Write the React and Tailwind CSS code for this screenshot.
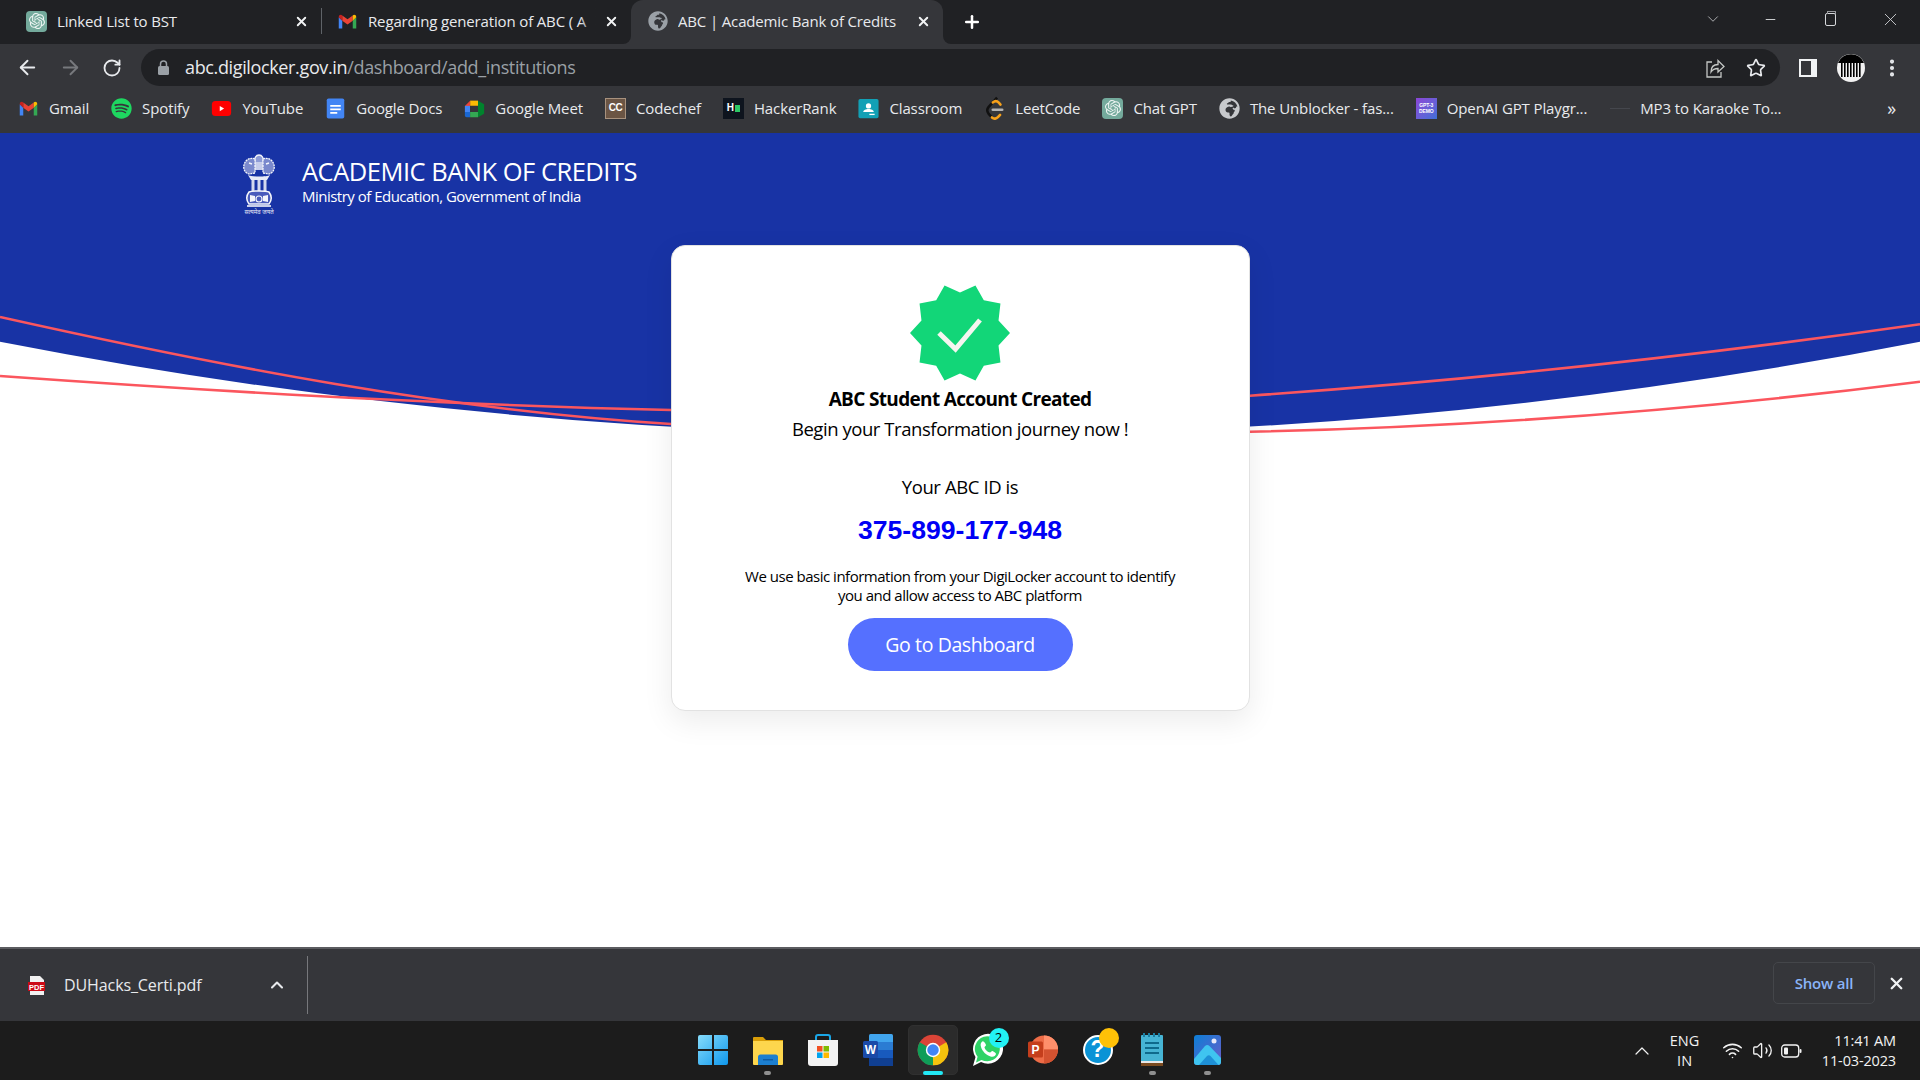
import React from 'react';
import { ArrowLeft, ArrowRight, RotateCw, Star, X, Plus, ChevronDown, ChevronUp, Minus, EllipsisVertical, Wifi, Volume2 } from 'lucide-react';
import { FaSpotify, FaGlobeAfrica } from 'react-icons/fa';
import { SiOpenai } from 'react-icons/si';

const segoe = { fontFamily: '"Open Sans", "Noto Sans", sans-serif' };

function GmailIcon({ size = 21 }) {
    return (
        <svg width={size} height={size} viewBox="0 0 24 24">
            <path d="M2 7v13h4v-9z" fill="#4285F4" />
            <path d="M18 11v9h4V7z" fill="#34A853" />
            <path d="M6 11l6 4.5 6-4.5V5l-6 4.5L6 5z" fill="#EA4335" />
            <path d="M2 7c0-2.5 2.4-3.4 4-2v6L2 7z" fill="#C5221F" />
            <path d="M22 7c0-2.500-2.400-3.400-4-2v6l4-4z" fill="#FBBC04" />
        </svg>
    );
}

function ChatGptIcon({ size = 21 }) {
    return (
        <div className="flex items-center justify-center rounded-[4px] bg-[#74aa9c]" style={{ width: size, height: size }}>
            <SiOpenai size={size - 5} color="#eef5f3" />
        </div>
    );
}

function YoutubeIcon() {
    return (
        <svg width="21" height="21" viewBox="0 0 24 24">
            <rect x="1" y="3.500" width="22" height="17" rx="4" fill="#f00" />
            <path d="M10 9l5 3-5 3z" fill="#fff" />
        </svg>
    );
}

function DocsIcon() {
    return (
        <svg width="21" height="21" viewBox="0 0 24 24">
            <rect x="2" y="0.500" width="20" height="23" rx="2" fill="#4285f4" />
            <path d="M6 8h12v2H6zM6 12h12v2H6zM6 16h8v2H6z" fill="#fff" />
        </svg>
    );
}

function MeetIcon() {
    return (
        <svg width="21" height="21" viewBox="0 0 24 24">
            <path d="M7 3h9v6H7z" fill="#fbbc04" />
            <path d="M1 9l6-6v6z" fill="#ea4335" />
            <path d="M1 9h6v7H1z" fill="#4285f4" />
            <path d="M1 16h6v6H3a2 2 0 0 1-2-2z" fill="#1967d2" />
            <path d="M7 16h9v6H7z" fill="#34a853" />
            <path d="M16 3v19l7-4V7z" fill="#00832d" />
            <rect x="7" y="9" width="9" height="7" fill="#35363a" />
        </svg>
    );
}

function CodechefIcon() {
    return (
        <div className="flex h-[21px] w-[21px] items-center justify-center border border-[#a8927e] bg-[#6b5544] text-[10px] font-bold leading-none tracking-[-0.5px] text-white" style={{ fontFamily: '"Liberation Sans", sans-serif' }}>
            CC
        </div>
    );
}

function HackerRankIcon() {
    return (
        <div className="flex h-[21px] w-[21px] items-center justify-center gap-[1px] bg-[#0e141e]">
            <span className="text-[10px] font-bold leading-none text-white" style={{ fontFamily: '"Liberation Sans", sans-serif' }}>H</span>
            <span className="h-[7px] w-[5px] bg-[#2ec866]" />
        </div>
    );
}

function ClassroomIcon() {
    return (
        <svg width="21" height="21" viewBox="0 0 24 24">
            <rect x="0.500" y="1" width="23" height="22" rx="2" fill="#12a0b5" />
            <circle cx="12" cy="9" r="3" fill="#fff" />
            <path d="M6 16c0-2.500 3-3.500 6-3.500s6 1 6 3.500z" fill="#fff" />
            <rect x="13" y="18" width="6" height="1.500" fill="#fff" />
        </svg>
    );
}

function LeetCodeIcon() {
    return (
        <svg width="21" height="24" viewBox="0 0 24 28">
            <path d="M15 2L5 13c-2 2.500-2 5 0 7.500l4 4.500" fill="none" stroke="#111" strokeWidth="3" />
            <path d="M9 25c2.500 2 5 1.800 7-.300l2.500-2.700" fill="none" stroke="#f7a11a" strokeWidth="3" strokeLinecap="round" />
            <path d="M10 7.500c2.500-2 5-1.800 7 .300l2 2.200" fill="none" stroke="#f7a11a" strokeWidth="3" strokeLinecap="round" />
            <path d="M10 16h11" stroke="#b3b3b3" strokeWidth="3" strokeLinecap="round" />
        </svg>
    );
}

function Gpt3Icon() {
    return (
        <div className="flex h-[21px] w-[21px] flex-col items-center justify-center bg-gradient-to-br from-[#8a45d6] to-[#3b6fd8] text-[5px] font-bold leading-[6px] text-white" style={{ fontFamily: '"Liberation Sans", sans-serif' }}>
            <span>GPT-3</span>
            <span>DEMO</span>
        </div>
    );
}

const bookmarks = [
    { label: 'Gmail', icon: <GmailIcon /> },
    { label: 'Spotify', icon: <FaSpotify size={21} color="#1ed760" /> },
    { label: 'YouTube', icon: <YoutubeIcon /> },
    { label: 'Google Docs', icon: <DocsIcon /> },
    { label: 'Google Meet', icon: <MeetIcon /> },
    { label: 'Codechef', icon: <CodechefIcon /> },
    { label: 'HackerRank', icon: <HackerRankIcon /> },
    { label: 'Classroom', icon: <ClassroomIcon /> },
    { label: 'LeetCode', icon: <LeetCodeIcon /> },
    { label: 'Chat GPT', icon: <ChatGptIcon /> },
    { label: 'The Unblocker - fas...', icon: <FaGlobeAfrica size={21} color="#c7c9cc" /> },
    { label: 'OpenAI GPT Playgr...', icon: <Gpt3Icon /> },
    { label: 'MP3 to Karaoke To...', icon: <span className="block h-[1px] w-[20px] bg-[#45474d]" /> },
];

function Tab({ icon, title, active, fade, className }) {
    return (
        <div className={`relative flex h-[44px] w-[312px] items-center pb-[2px] pr-[12px] ${active ? 'rounded-t-[12px] bg-[#35363a]' : ''} ${className}`}>
            <div className="flex w-[21px] shrink-0 items-center justify-center">{icon}</div>
            <div className="ml-[10px] flex-1 overflow-hidden whitespace-nowrap text-[15px] tracking-[-0.15px] text-[#e8eaed]">
                {title}
            </div>
            {fade && <div className="absolute bottom-0 right-[33px] top-0 w-[18px] bg-gradient-to-r from-transparent to-[#202124]" />}
            <X size={15} strokeWidth={3} className="ml-[6px] shrink-0 text-[#f1f3f4]" />
            {active && (
                <>
                    <div className="absolute bottom-0 left-[-8px] h-[8px] w-[8px] bg-[#35363a]">
                        <div className="h-full w-full rounded-br-[8px] bg-[#202124]" />
                    </div>
                    <div className="absolute bottom-0 right-[-8px] h-[8px] w-[8px] bg-[#35363a]">
                        <div className="h-full w-full rounded-bl-[8px] bg-[#202124]" />
                    </div>
                </>
            )}
        </div>
    );
}

function TabStrip() {
    return (
        <div className="flex h-[44px] items-center bg-[#202124] pl-[9px]">
            <Tab icon={<ChatGptIcon />} title="Linked List to BST" className="pl-[17px]" />
            <div className="relative z-10 mb-[2px] h-[26px] w-[1px] bg-[#5f6368]" />
            <Tab icon={<GmailIcon />} title="Regarding generation of ABC ( A" fade className="ml-[-3px] pl-[18px]" />
            <Tab icon={<FaGlobeAfrica size={20} color="#9aa0a6" />} title="ABC | Academic Bank of Credits" active className="pl-[16px]" />
            <Plus size={20} strokeWidth={3} className="ml-[19px] text-white" />
            <div className="mb-[6px] ml-auto flex items-center text-[#d5d7da]">
                <ChevronDown size={18} strokeWidth={1} className="mr-[41.500px]" />
                <Minus size={15} strokeWidth={1.5} className="mr-[47px]" />
                <div className="relative mr-[44px] h-[13px] w-[11px] rounded-[2px] border border-[#d5d7da]">
                    <div className="absolute left-[1px] top-[-3px] h-[3px] w-[9px] border-x border-t border-[#9a9ca0]" />
                </div>
                <X size={21} strokeWidth={1} className="mr-[19px]" />
            </div>
        </div>
    );
}

function Toolbar() {
    return (
        <div className="flex h-[43px] items-center bg-[#35363a] pl-[16px] pt-[4px]">
            <ArrowLeft size={23} strokeWidth={2} className="text-[#e8eaed]" />
            <ArrowRight size={23} strokeWidth={2} className="ml-[20px] text-[#77797d]" />
            <RotateCw size={20} strokeWidth={2.2} className="ml-[20px] text-[#e8eaed]" />
            <div className="ml-[19px] flex h-[37px] w-[1639px] items-center rounded-full bg-[#202124] pl-[17px]">
                <svg width="11" height="15" viewBox="0 0 11 15">
                    <path d="M2.500 6V4a3 3 0 0 1 6 0v2" fill="none" stroke="#9aa0a6" strokeWidth="1.500" />
                    <rect y="6" width="11" height="9" rx="1.500" fill="#9aa0a6" />
                </svg>
                <span className="ml-[16px] text-[18px] tracking-[-0.36px] text-[#e8eaed]">
                    abc.digilocker.gov.in<span className="text-[#9aa0a6]">/dashboard/add_institutions</span>
                </span>
                <svg className="ml-auto text-[#c4c7c5]" width="22" height="22" viewBox="0 0 22 22" fill="none" stroke="currentColor" strokeWidth="1.300">
                    <path d="M8 5H3v15h14v-5" />
                    <path d="M7 15c0-5 3-7.500 7-7.500V3.500l6 6-6 5.500v-3.500c-3 0-5.500 1-7 3.500z" />
                </svg>
                <Star size={20} strokeWidth={2} className="ml-[20px] mr-[14px] text-[#e8eaed]" />
            </div>
            <div className="ml-[19px] h-[18px] w-[18px] border-[2.500px] border-[#f1f3f4] border-r-[6px]" />
            <Avatar />
            <EllipsisVertical size={22} strokeWidth={2.500} className="ml-[16px] text-[#e8eaed]" />
        </div>
    );
}

function Avatar() {
    const keys = [5, 8, 11, 14, 17, 20, 23];
    return (
        <svg className="ml-[20px]" width="28" height="28" viewBox="0 0 28 28">
            <circle cx="14" cy="14" r="14" fill="#f2f2f2" />
            <path d="M1 9a14 14 0 0 1 26 0z" fill="#000" />
            {keys.map(x => <rect key={x} x={x - 1} y="9" width="1.600" height="14" fill="#000" />)}
        </svg>
    );
}

function BookmarksBar() {
    return (
        <div className="flex h-[46px] items-center gap-[22px] bg-[#35363a] pb-[4px] pl-[18px] text-[15px] tracking-[-0.12px] text-[#e8eaed]">
            {bookmarks.map(b => (
                <div key={b.label} className="flex items-center gap-[10px] whitespace-nowrap">
                    <div className="flex h-[24px] w-[21px] items-center justify-center">{b.icon}</div>
                    <span>{b.label}</span>
                </div>
            ))}
            <span className="ml-auto mr-[24px] text-[18px] leading-none">»</span>
        </div>
    );
}

function Emblem() {
    return (
        <div className="flex w-[34px] flex-col items-center">
            <svg width="34" height="54" viewBox="0 0 34 54" fill="none" stroke="#f4f6fb">
                {/* centre lion */}
                <path d="M13 8c-1-4 1-7 4-7s5 3 4 7" strokeWidth="1.400" fill="#8d9bd6" />
                <path d="M13 8h8v8h-8z" fill="#c6cdeb" stroke="none" />
                {/* side lions */}
                <path d="M13 5C8 3 3 6 2 11c-1 4 1 8 5 9l6-1z" strokeWidth="1.300" strokeDasharray="2 0.700" fill="#7a89cd" />
                <path d="M21 5c5-2 10 1 11 6 1 4-1 8-5 9l-6-1z" strokeWidth="1.300" strokeDasharray="2 0.700" fill="#7a89cd" />
                <path d="M7 9l3 1M27 9l-3 1" strokeWidth="1.500" />
                {/* abacus */}
                <path d="M6 21c3 2 19 2 22 0l-3 5H9z" fill="#e8ebf7" stroke="none" />
                {/* legs */}
                <path d="M11 26v12M17 26v12M23 26v12" strokeWidth="3" opacity=".85" />
                <path d="M14 27v10M20 27v10" strokeWidth="1" stroke="#1833a5" />
                {/* base */}
                <path d="M7 38c3-1.500 17-1.500 20 0 3 4 3 8 0 12H7c-3-4-3-8 0-12z" strokeWidth="1.500" fill="#4a5cbc" />
                <path d="M8 41l5 1v5l-5 1zM26 41l-5 1v5l5 1z" fill="#f4f6fb" stroke="none" />
                <circle cx="17" cy="45" r="3" strokeWidth="1.200" />
                <path d="M5 52h24" strokeWidth="1.600" />
            </svg>
            <div className="mt-[1px] text-[6px] leading-[7px] text-[#e6e9f6]" style={{ fontFamily: '"Noto Sans", "DejaVu Sans", sans-serif' }}>सत्यमेव जयते</div>
        </div>
    );
}

function VerifiedBadge() {
    const pts = [];
    for (let i = 0; i < 20; i++) {
        const r = i % 2 === 0 ? 50 : 40.5;
        const a = (i * 18 * Math.PI) / 180;
        pts.push(`${50 + r * Math.cos(a)},${48 + r * Math.sin(a)}`);
    }
    return (
        <svg width="100" height="96" viewBox="0 0 100 96">
            <polygon points={pts.join(' ')} fill="#12d678" />
            <path d="M29 48l16.500 16L70 35" fill="none" stroke="#f5f5f0" strokeWidth="5" />
        </svg>
    );
}

function Hero() {
    return (
        <svg className="absolute left-0 top-0 h-[320px] w-full" viewBox="0 133 1920 320" preserveAspectRatio="none">
            <path d="M0 133H1920V341.700Q960 528.600 0 341.700Z" fill="#1833a5" />
            <path d="M0 317C224 367 447 410 671 424L1250 395.700C1473 380 1697 356 1920 324.300" fill="none" stroke="#fb565e" strokeWidth="2.600" />
            <path d="M0 376C224 392 447 405 671 410L1250 431.700C1473 427 1697 410 1920 381.700" fill="none" stroke="#fb565e" strokeWidth="2.600" />
        </svg>
    );
}

function SuccessCard() {
    return (
        <div className="relative mx-auto mt-[45px] flex w-[579px] flex-col items-center rounded-[14px] border border-[#e2e2e2] bg-white pb-[39px] pt-[39px] text-center text-black shadow-[0_10px_30px_rgba(0,0,0,0.08)]">
            <VerifiedBadge />
            <h1 className="mt-[4px] text-[19px] font-bold leading-[28px] tracking-[-0.66px]">ABC Student Account Created</h1>
            <p className="mt-[2px] text-[18.500px] leading-[28px] tracking-[-0.44px]">Begin your Transformation journey now !</p>
            <p className="mt-[30px] text-[18.500px] leading-[28px] tracking-[-0.4px]">Your ABC ID is</p>
            <p className="mt-[13px] text-[26.600px] font-bold leading-[32px] text-[#0000f5]" style={{ fontFamily: '"Liberation Sans", Arial, sans-serif' }}>375-899-177-948</p>
            <p className="mt-[21px] text-[15px] leading-[19px] tracking-[-0.49px]">
                We use basic information from your DigiLocker account to identify
                <br />
                you and allow access to ABC platform
            </p>
            <button className="mt-[13px] h-[53px] w-[225px] rounded-full bg-[#5570ff] text-[19.500px] tracking-[-0.4px] text-white">Go to Dashboard</button>
        </div>
    );
}

function PageContent() {
    return (
        <div className="relative flex-1 overflow-hidden bg-white">
            <Hero />
            <div className="relative flex h-[67px] items-start gap-[26px] pl-[242px] pt-[21px] text-white">
                <Emblem />
                <div className="mt-[2px]">
                    <div className="text-[25.500px] leading-[30px] tracking-[-0.5px]">ACADEMIC BANK OF CREDITS</div>
                    <div className="text-[15px] leading-[20px] tracking-[-0.51px]">Ministry of Education, Government of India</div>
                </div>
            </div>
            <SuccessCard />
        </div>
    );
}

function DownloadBar() {
    return (
        <div className="flex h-[74px] items-center border-t-2 border-[#5b5c60] bg-[#35363a] text-[#e8eaed]">
            <svg className="ml-[28px]" width="17" height="19" viewBox="0 0 17 19">
                <path d="M2 0h10l4 4v15H2z" fill="#f1f1f1" />
                <rect y="6" width="17" height="9" fill="#cc0a16" />
                <text x="8.500" y="13.500" textAnchor="middle" fontSize="7.500" fontWeight="700" fill="#fff" fontFamily="Liberation Sans">PDF</text>
            </svg>
            <span className="ml-[19px] w-[203px] text-[16px] tracking-[-0.1px]">DUHacks_Certi.pdf</span>
            <ChevronUp size={20} strokeWidth={2.500} className="mb-[1px] text-[#e8eaed]" />
            <div className="ml-[20px] h-[58px] w-[1px] bg-[#77787c]" />
            <div className="mb-[4px] ml-auto flex h-[42px] w-[102px] items-center justify-center rounded-[5px] border border-[#44464a] text-[15px] font-semibold tracking-[-0.2px] text-[#8ab4f8]">Show all</div>
            <X size={19} strokeWidth={3} className="mb-[4px] ml-[12px] mr-[14px] text-[#f1f3f4]" />
        </div>
    );
}

function StartIcon() {
    return (
        <svg width="30" height="30" viewBox="0 0 30 30">
            <defs>
                <linearGradient id="startGrad" x1="0" y1="0" x2="1" y2="1">
                    <stop offset="0" stopColor="#86dcfb" />
                    <stop offset="1" stopColor="#0f97ec" />
                </linearGradient>
            </defs>
            <path d="M0 2a2 2 0 0 1 2-2h12v14H0zM16 0h12a2 2 0 0 1 2 2v12H16zM0 16h14v14H2a2 2 0 0 1-2-2zM16 16h14v12a2 2 0 0 1-2 2H16z" fill="url(#startGrad)" />
        </svg>
    );
}

function FolderIcon() {
    return (
        <svg width="30" height="30" viewBox="0 0 30 30">
            <path d="M0 3a1 1 0 0 1 1-1h9l3 3h17v2H0z" fill="#d99e08" />
            <path d="M0 6h30v23a1 1 0 0 1-1 1H1a1 1 0 0 1-1-1z" fill="#fdd64d" />
            <path d="M5 30v-8a2.500 2.500 0 0 1 2.500-2.500h15a2.500 2.500 0 0 1 2.500 2.500v8z" fill="#1c7fd0" />
            <rect x="10" y="24" width="10" height="1.500" fill="#0f5ca3" />
        </svg>
    );
}

function StoreIcon() {
    return (
        <svg width="30" height="32" viewBox="0 0 30 32">
            <path d="M8 7V3a2 2 0 0 1 2-2h10a2 2 0 0 1 2 2v4" fill="none" stroke="#1aa7e8" strokeWidth="2" />
            <path d="M0 6h30v23a3 3 0 0 1-3 3H3a3 3 0 0 1-3-3z" fill="#f3f3f3" />
            <rect x="9" y="12" width="5.500" height="5.500" fill="#f25022" />
            <rect x="15.500" y="12" width="5.500" height="5.500" fill="#7fba00" />
            <rect x="9" y="18.500" width="5.500" height="5.500" fill="#00a4ef" />
            <rect x="15.500" y="18.500" width="5.500" height="5.500" fill="#ffb900" />
        </svg>
    );
}

function WordIcon() {
    return (
        <svg width="30" height="32" viewBox="0 0 30 32">
            <rect x="6" width="24" height="32" rx="1.500" fill="#41a5ee" />
            <rect x="6" y="8" width="24" height="8" fill="#2b7cd3" />
            <rect x="6" y="16" width="24" height="8" fill="#185abd" />
            <rect x="6" y="24" width="24" height="8" fill="#103f91" />
            <rect y="7" width="15" height="17" rx="1.500" fill="#1a4aa8" />
            <text x="7.500" y="20" textAnchor="middle" fontSize="12" fontWeight="700" fill="#fff" fontFamily="Liberation Sans">W</text>
        </svg>
    );
}

function ChromeIcon() {
    return (
        <svg width="32" height="32" viewBox="0 0 24 24">
            <circle cx="12" cy="12" r="11.500" fill="#db4437" />
            <path d="M12 12L2.040 6.250A11.500 11.500 0 0 0 12 23.500z" fill="#0f9d58" />
            <path d="M12 12l-0 11.500A11.500 11.500 0 0 0 21.960 6.250z" fill="#f4c20d" />
            <circle cx="12" cy="12" r="5.400" fill="#fff" />
            <circle cx="12" cy="12" r="4.300" fill="#4285f4" />
        </svg>
    );
}

function WhatsappIcon() {
    return (
        <div className="relative">
            <svg width="32" height="34" viewBox="0 0 32 34">
                <path d="M1 33l2.500-9A15 15 0 1 1 9 29z" fill="#fff" />
                <path d="M4 29.500l1.600-5.800A12.500 12.500 0 1 1 9.500 26.900z" fill="#2fd366" />
                <path d="M11 8c-2 1-3 3-2 6 1.500 4.500 5 8 9.500 9.500 3 .8 5-.5 5.500-2.500.2-1-2.500-2.500-3.500-3-1-.3-1.500 1.500-2.500 1.500-2 0-5-3-5.500-5 0-1 1.500-1.500 1.500-2.500-.5-1.500-2-4-3.500-4z" fill="#fff" />
            </svg>
            <div className="absolute right-[-5px] top-[-5px] flex h-[20px] w-[20px] items-center justify-center rounded-full bg-[#22f2f5] text-[13px] text-black">2</div>
        </div>
    );
}

function PowerPointIcon() {
    return (
        <svg width="30" height="32" viewBox="0 0 30 32">
            <circle cx="16" cy="15.500" r="14" fill="#ed6c47" />
            <path d="M16 1.500a14 14 0 0 1 14 14H16z" fill="#ff8f6b" />
            <path d="M16 15.500h14a14 14 0 0 1-14 14z" fill="#d35230" />
            <rect y="7.500" width="15" height="16" rx="1.500" fill="#c43e1c" />
            <text x="7.500" y="20" textAnchor="middle" fontSize="12" fontWeight="700" fill="#fff" fontFamily="Liberation Sans">P</text>
        </svg>
    );
}

function HelpIcon() {
    return (
        <div className="relative">
            <div className="flex h-[30px] w-[30px] items-center justify-center rounded-full border-2 border-white bg-[#0a93d6] text-[23px] font-bold leading-none text-white" style={{ fontFamily: '"Liberation Sans", sans-serif' }}>?</div>
            <div className="absolute right-[-6px] top-[-7px] h-[20px] w-[20px] rounded-full bg-[#ffc107]" />
        </div>
    );
}

function NotepadIcon() {
    return (
        <svg width="23" height="34" viewBox="0 0 23 34">
            <rect y="2" width="22" height="31" rx="1" fill="#46b4d4" />
            <rect y="29" width="22" height="4" fill="#7a4a1f" />
            <rect y="28" width="22" height="2" fill="#e8e8e8" />
            <path d="M2 0h2v4H2zM7 0h2v4H7zM12 0h2v4h-2zM17 0h2v4h-2z" fill="#1a7fa3" />
            <path d="M4 9h14v2H4zM4 14h14v2H4zM4 19h14v2H4z" fill="#0f6a8c" />
        </svg>
    );
}

function PhotosIcon() {
    return (
        <svg width="27" height="30" viewBox="0 0 27 30">
            <defs>
                <linearGradient id="photoGrad" x1="0" y1="0" x2="1" y2="1">
                    <stop offset="0" stopColor="#0c7fd6" />
                    <stop offset="1" stopColor="#6b5cc9" />
                </linearGradient>
            </defs>
            <rect width="27" height="30" rx="3" fill="url(#photoGrad)" />
            <circle cx="20" cy="6" r="2.500" fill="#e8e8f8" />
            <path d="M0 24l11-13c1.500-1.500 3-1.500 4.500 0L27 23v4a3 3 0 0 1-3 3H3a3 3 0 0 1-3-3z" fill="#3fc4f0" />
            <path d="M5 30l8-9c1-1 2.500-1 3.500 0l8 9z" fill="#1e90d6" />
        </svg>
    );
}

const taskbarApps = [
    { id: 'start', icon: <StartIcon /> },
    { id: 'files', icon: <FolderIcon />, dot: true },
    { id: 'store', icon: <StoreIcon /> },
    { id: 'word', icon: <WordIcon /> },
    { id: 'chrome', icon: <ChromeIcon />, active: true },
    { id: 'whatsapp', icon: <WhatsappIcon /> },
    { id: 'ppt', icon: <PowerPointIcon /> },
    { id: 'help', icon: <HelpIcon /> },
    { id: 'notepad', icon: <NotepadIcon />, dot: true },
    { id: 'photos', icon: <PhotosIcon />, dot: true },
];

function Taskbar() {
    return (
        <div className="grid h-[59px] grid-cols-[1fr_auto_1fr] items-center bg-[#1c1c1c] text-[#f2f2f2]">
            <div />
            <div className="flex">
                {taskbarApps.map(app => (
                    <div key={app.id} className="relative flex h-[59px] w-[55px] items-center justify-center pb-[2px]">
                        {app.active && <div className="absolute left-[2.500px] top-[4px] h-[50px] w-[50px] rounded-[5px] border border-[#303030] bg-[#2b2b2b]" />}
                        <div className="relative">{app.icon}</div>
                        {app.dot && <div className="absolute bottom-[5px] left-[24px] h-[4px] w-[7px] rounded-full bg-[#8f8f8f]" />}
                        {app.active && <div className="absolute bottom-[5px] left-[18px] h-[4px] w-[20px] rounded-full bg-[#22e8f5]" />}
                    </div>
                ))}
            </div>
            <div className="flex items-center justify-end pr-[24px] text-[14.500px] leading-[20px]">
                <ChevronUp size={24} strokeWidth={1.200} />
                <div className="ml-[15.500px] text-center">
                    <div>ENG</div>
                    <div>IN</div>
                </div>
                <Wifi size={21} strokeWidth={1.800} className="ml-[22.500px]" />
                <Volume2 size={21} strokeWidth={1.500} className="ml-[9px]" />
                <svg className="ml-[8px]" width="21" height="14" viewBox="0 0 21 14">
                    <rect x="0.700" y="1" width="17" height="12" rx="3" fill="none" stroke="#f2f2f2" strokeWidth="1.300" />
                    <rect x="3" y="3.500" width="4" height="7" rx="1" fill="#f2f2f2" />
                    <rect x="18.500" y="5" width="2" height="4" rx="1" fill="#f2f2f2" />
                </svg>
                <div className="ml-[20px] text-right tracking-[-0.15px]">
                    <div>11:41 AM</div>
                    <div>11-03-2023</div>
                </div>
            </div>
        </div>
    );
}

export default function App() {
    return (
        <div className="flex h-screen w-full flex-col overflow-hidden" style={segoe}>
            <TabStrip />
            <Toolbar />
            <BookmarksBar />
            <PageContent />
            <DownloadBar />
            <Taskbar />
        </div>
    );
}
